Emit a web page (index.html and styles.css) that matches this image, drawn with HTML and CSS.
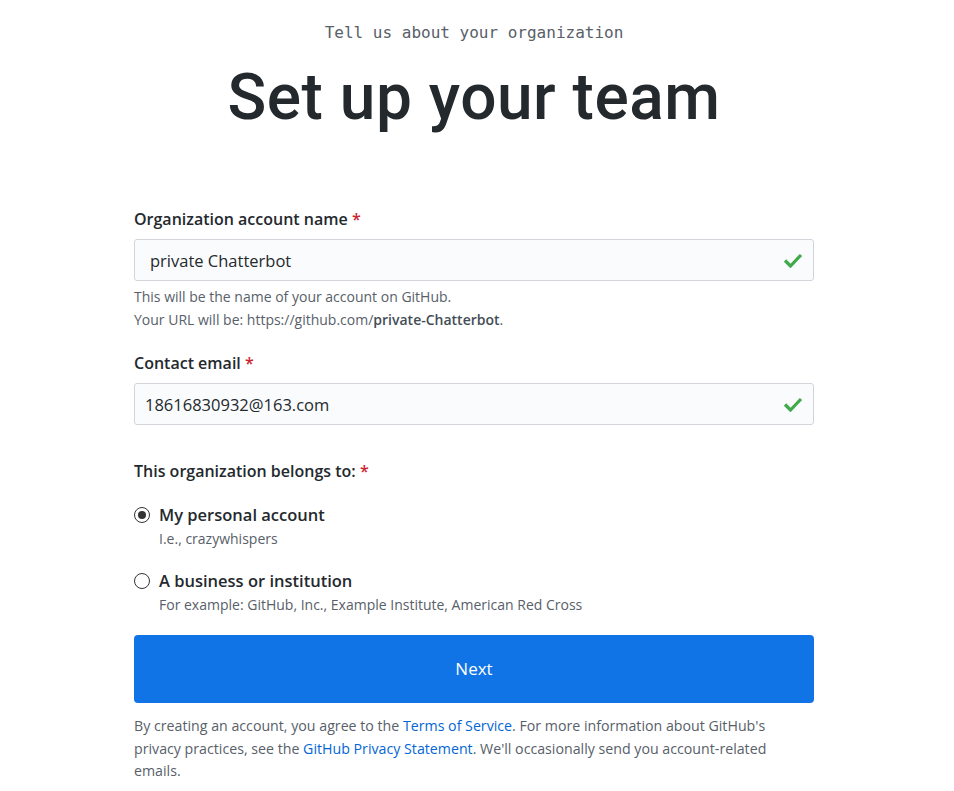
FILE: index.html
```html
<html>
    <head>
        <link rel="stylesheet" href="styles.css">
    </head>
    <body>
        <div class="setup">
            <div class="setup_header">
                <p class="setup_sub">Tell us about your organization</p>
                <h1 class="setup_title">Set up your team</h1>
            </div>
            <form class="setup_form">
                <div class="field">
                    <label class="field_label">Organization account name <span class="req">*</span></label>
                    <div class="field_input">
                        <span class="field_value">private Chatterbot</span>
                        <svg class="field_ok" width="20" height="16" viewBox="0 0 20 16"><path d="M2 8.5 L7.5 14 L18 3" fill="none" stroke="#40a94b" stroke-width="3.2"/></svg>
                    </div>
                    <p class="note">This will be the name of your account on GitHub.<br>Your URL will be: https://github.com/<strong>private-Chatterbot</strong>.</p>
                </div>
                <div class="field field_email">
                    <label class="field_label">Contact email <span class="req">*</span></label>
                    <div class="field_input tight">
                        <span class="field_value">18616830932@163.com</span>
                        <svg class="field_ok" width="20" height="16" viewBox="0 0 20 16"><path d="M2 8.5 L7.5 14 L18 3" fill="none" stroke="#40a94b" stroke-width="3.2"/></svg>
                    </div>
                </div>
                <div class="field field_radios">
                    <label class="field_label">This organization belongs to: <span class="req">*</span></label>
                    <div class="radio">
                        <span class="radio_dot checked"></span>
                        <div>
                            <div class="radio_title">My personal account</div>
                            <div class="radio_note">I.e., crazywhispers</div>
                        </div>
                    </div>
                    <div class="radio">
                        <span class="radio_dot"></span>
                        <div>
                            <div class="radio_title">A business or institution</div>
                            <div class="radio_note">For example: GitHub, Inc., Example Institute, American Red Cross</div>
                        </div>
                    </div>
                </div>
                <div class="btn_next">Next</div>
                <p class="legal">By creating an account, you agree to the <a href="#">Terms of Service</a>. For more information about GitHub's privacy practices, see the <a href="#">GitHub Privacy Statement</a>. We'll occasionally send you account-related emails.</p>
            </form>
        </div>
    </body>
</html>
```

FILE: styles.css
```css
body
{
    margin:0;
    padding:0 6px 0 0;
    background:#fff;
    color:#24292e;
    font-family:"Open Sans","Noto Sans",Arial,sans-serif;
}
.setup
{
    width:680px;
    margin:0 auto;
}
.setup_header
{
    text-align:center;
    padding-top:22px;
}
.setup_sub
{
    margin:0;
    font-family:"DejaVu Sans Mono",monospace;
    font-size:16px;
    line-height:22px;
    color:#586069;
}
.setup_title
{
    margin:15px 0 0 0;
    font-family:Roboto,"Liberation Sans",sans-serif;
    font-weight:500;
    font-size:64px;
    line-height:78px;
    letter-spacing:0.5px;
    color:#24292e;
}
.setup_form
{
    margin:70px 0 0 0;
}
.field
{
    margin-bottom:20px;
}
.field_email
{
    margin-bottom:34px;
}
.field_label
{
    display:block;
    font-size:16px;
    font-weight:600;
    line-height:24px;
    margin-bottom:8px;
}
.req
{
    color:#cb2431;
}
.field_input
{
    display:flex;
    align-items:center;
    justify-content:space-between;
    height:40px;
    padding:0 10px 0 15px;
    background:#fafbfc;
    border:1px solid #d1d5da;
    border-radius:3px;
    font-size:16.5px;
}
.field_input.tight
{
    padding-left:10px;
}
.note
{
    margin:4px 0 0 0;
    font-size:14px;
    line-height:23px;
    color:#586069;
}
.note strong
{
    font-weight:600;
    color:#444d56;
}
.field_radios .field_label
{
    margin-bottom:20px;
}
.radio
{
    display:flex;
    align-items:flex-start;
    gap:9px;
    margin-bottom:18px;
}
.radio_dot
{
    width:16px;
    height:16px;
    margin:4px 0 0 0;
    border:1px solid #333;
    border-radius:50%;
    box-sizing:border-box;
    position:relative;
    background:#fff;
}
.radio_dot.checked::after
{
    content:"";
    position:absolute;
    left:3px;
    top:3px;
    width:8px;
    height:8px;
    border-radius:50%;
    background:#333;
}
.radio_title
{
    font-size:16.5px;
    font-weight:600;
    line-height:24px;
}
.radio_note
{
    font-size:14px;
    line-height:24px;
    color:#586069;
}
.btn_next
{
    margin-top:-2px;
    height:68px;
    line-height:68px;
    text-align:center;
    background:#1074e7;
    color:#fff;
    font-size:17px;
    border-radius:4px;
}
.legal
{
    max-width:650px;
    margin:12px 0 0 0;
    font-size:14.2px;
    line-height:22.5px;
    color:#586069;
}
.legal a
{
    color:#0366d6;
    text-decoration:none;
}
```
